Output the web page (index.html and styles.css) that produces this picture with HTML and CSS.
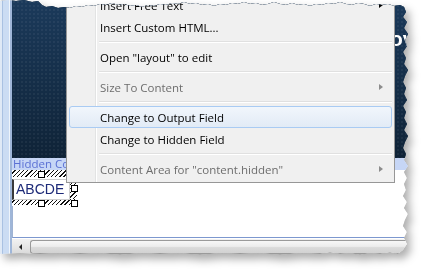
FILE: index.html
```html
<!DOCTYPE html>
<html lang="en">
<head>
  <meta charset="UTF-8">
  <title>Layout editor context menu</title>
  <link rel="stylesheet" href="styles.css">
</head>
<body>
  <div class="frame">
    <div class="shot">
      <div class="rail"></div>
      <div class="canvas">
        <div class="banner"><span class="banner-title">ov</span></div>
        <div class="hidden-bar">Hidden Content</div>
        <div class="field-area">
          <div class="hatch hatch-top"></div>
          <div class="field-row">
            <div class="field">ABCDE</div>
            <div class="hatch hatch-side"></div>
          </div>
          <div class="hatch hatch-bottom"></div>
          <i class="handle h-top"></i>
          <i class="handle h-right"></i>
          <i class="handle h-bottom"></i>
          <i class="handle h-corner"></i>
        </div>
        <div class="filler"></div>
        <div class="scrollbar">
          <span class="scroll-arrow"></span>
          <span class="scroll-thumb"></span>
        </div>
      </div>

      <!-- context menu -->
      <ul class="menu">
        <li class="item sub">Insert Free Text</li>
        <li class="item">Insert Custom HTML...</li>
        <li class="sep"></li>
        <li class="item">Open "layout" to edit</li>
        <li class="sep"></li>
        <li class="item sub disabled">Size To Content</li>
        <li class="sep"></li>
        <li class="item active">Change to Output Field</li>
        <li class="item">Change to Hidden Field</li>
        <li class="sep"></li>
        <li class="item sub disabled">Content Area for "content.hidden"</li>
      </ul>
    </div>
  </div>
</body>
</html>
```

FILE: styles.css
```css
body {
  margin: 0;
  background: #ffffff;
  font-family: "Open Sans", "Noto Sans", sans-serif;
  overflow: hidden;
}
.frame {
  width: 421px;
  height: 269px;
  filter: drop-shadow(0 0 0.6px #8a8a8a) drop-shadow(4px 5px 4px rgba(0, 0, 0, 0.32));
}
.shot {
  position: relative;
  display: flex;
  width: 410px;
  height: 255px;
  background: #ffffff;
  clip-path: polygon(0 1px, 8px 0, 16px 1px, 24px 0, 32px 2px, 38px 1px, 42px 5px, 46px 7px, 52px 6px, 58px 8px, 64px 7px, 70px 8px, 76px 6px, 82px 7px, 88px 5px, 94px 6px, 100px 4px, 106px 5px, 112px 3px, 118px 5px, 124px 4px, 130px 6px, 136px 5px, 142px 7px, 148px 5px, 154px 6px, 160px 4px, 166px 5px, 172px 3px, 178px 4px, 184px 2px, 190px 4px, 196px 3px, 202px 5px, 208px 4px, 214px 6px, 220px 4px, 226px 5px, 232px 3px, 238px 4px, 244px 2px, 250px 4px, 256px 3px, 262px 5px, 268px 4px, 274px 2px, 280px 4px, 286px 5px, 292px 3px, 298px 5px, 304px 4px, 310px 6px, 316px 4px, 322px 5px, 328px 3px, 334px 4px, 340px 2px, 346px 4px, 352px 5px, 358px 3px, 364px 4px, 370px 6px, 376px 4px, 382px 5px, 388px 4px, 394px 6px, 400px 5px, 404px 7px, 406px 12px, 403px 17px, 407px 22px, 404px 28px, 408px 34px, 405px 40px, 407px 46px, 403px 52px, 406px 58px, 404px 64px, 408px 70px, 405px 76px, 403px 82px, 406px 88px, 404px 94px, 407px 100px, 403px 106px, 406px 112px, 404px 118px, 407px 124px, 404px 130px, 408px 136px, 405px 142px, 403px 148px, 406px 154px, 404px 160px, 408px 166px, 404px 172px, 407px 178px, 404px 184px, 406px 190px, 403px 196px, 407px 202px, 404px 208px, 408px 214px, 405px 220px, 403px 226px, 407px 232px, 404px 238px, 407px 244px, 403px 250px, 398px 254px, 390px 252px, 380px 254px, 370px 253px, 360px 255px, 350px 253px, 340px 254px, 330px 252px, 320px 254px, 300px 253px, 280px 255px, 260px 253px, 240px 254px, 220px 253px, 200px 255px, 180px 253px, 160px 254px, 140px 253px, 120px 255px, 100px 253px, 80px 254px, 60px 253px, 40px 254px, 20px 253px, 0 254px);
}
.rail {
  width: 12px;
  flex: none;
  background: linear-gradient(to right, #dfe9f6 0, #dfe9f6 2px, #a9c1e2 2px, #a9c1e2 3px, #cbdcf3 3px, #cbdcf3 9px, #eef4fb 9px, #eef4fb 10px, #9fb6d8 10px, #9fb6d8 12px);
}
.canvas {
  flex: 1;
  display: flex;
  flex-direction: column;
  min-width: 0;
}
.banner {
  height: 158px;
  flex: none;
  background-color: #15304c;
  background-image:
    radial-gradient(circle, rgba(255, 255, 255, 0.05) 0.8px, transparent 1.2px),
    linear-gradient(#1b3a5b, #0f2337);
  background-size: 4px 4px, 100% 100%;
  overflow: hidden;
}
.banner-title {
  display: block;
  margin: 28px 0 0 378px;
  color: #ffffff;
  font-family: "Liberation Sans", sans-serif;
  font-weight: bold;
  font-size: 21px;
  line-height: 22px;
  white-space: nowrap;
}
.hidden-bar {
  height: 12px;
  flex: none;
  background: #c6d6f6;
  color: #5a70d4;
  font-size: 11.5px;
  line-height: 12px;
  padding-left: 1px;
  white-space: nowrap;
  overflow: hidden;
}
.field-area {
  position: relative;
  height: 36px;
  flex: none;
}
.hatch {
  background: repeating-linear-gradient(135deg, #ffffff 0, #ffffff 2px, #111111 2px, #111111 3px);
}
.hatch-top {
  width: 64px;
  height: 7px;
}
.field-row {
  display: flex;
  height: 22px;
}
.field {
  width: 53px;
  height: 19px;
  margin-top: 2px;
  border: 1px solid #cfcfcf;
  border-left: 2px solid #3a3a3a;
  padding-left: 2px;
  color: #1d2a78;
  font-family: "Liberation Sans", sans-serif;
  font-size: 14px;
  line-height: 19px;
}
.hatch-side {
  width: 7px;
  height: 22px;
}
.hatch-bottom {
  width: 64px;
  height: 6px;
}
.handle {
  position: absolute;
  width: 5px;
  height: 5px;
  background: #ffffff;
  border: 1px solid #000000;
}
.h-top { left: 26px; top: 1px; }
.h-right { left: 59px; top: 15px; }
.h-bottom { left: 26px; top: 30px; }
.h-corner { left: 59px; top: 30px; }
.filler {
  flex: 1;
  border-left: 1px solid #9fb3d3;
  border-bottom: 1px solid #7d98cf;
}
.scrollbar {
  height: 15px;
  flex: none;
  display: flex;
  align-items: center;
  border-top: 1px solid #ffffff;
  background: linear-gradient(#f2f2f2, #e4e4e4 60%, #d9d9d9);
  border-bottom: 1px solid #a8a8a8;
}
.scroll-arrow {
  width: 0;
  height: 0;
  margin-left: 7px;
  border-top: 3px solid transparent;
  border-bottom: 3px solid transparent;
  border-right: 3px solid #222222;
}
.scroll-thumb {
  flex: 1;
  height: 12px;
  margin-left: 8px;
  border: 1px solid #9a9a9a;
  border-right: none;
  border-radius: 3px 0 0 3px;
  background: linear-gradient(#f7f7f7, #ececec 45%, #dadada 55%, #d2d2d2);
}

.menu {
  position: absolute;
  left: 66px;
  top: -9px;
  width: 323px;
  margin: 0;
  padding: 2px;
  list-style: none;
  border: 1px solid #979797;
  background-color: #f0f0f0;
  background-image: linear-gradient(to right, transparent 28px, #e2e3e3 28px, #e2e3e3 29px, #ffffff 29px, #ffffff 30px, transparent 30px);
  font-size: 11.5px;
  color: #000000;
}
.item {
  display: flex;
  align-items: center;
  justify-content: space-between;
  height: 20px;
  padding-left: 30px;
  border: 1px solid transparent;
  border-radius: 3px;
  white-space: nowrap;
}
.item.sub::after {
  content: "";
  margin-right: 8px;
  border-top: 3.5px solid transparent;
  border-bottom: 3.5px solid transparent;
  border-left: 4px solid #000000;
}
.item.disabled {
  color: #6d6d6d;
}
.item.disabled::after {
  border-left-color: #8c8c8c;
}
.item.active {
  border-color: #a9cbf3;
  background: linear-gradient(#f1f6fc, #e2ebf6);
}
.sep {
  height: 1px;
  margin: 3px 0 3px 30px;
  border-top: 1px solid #e0e0e0;
  background: #ffffff;
}
```
